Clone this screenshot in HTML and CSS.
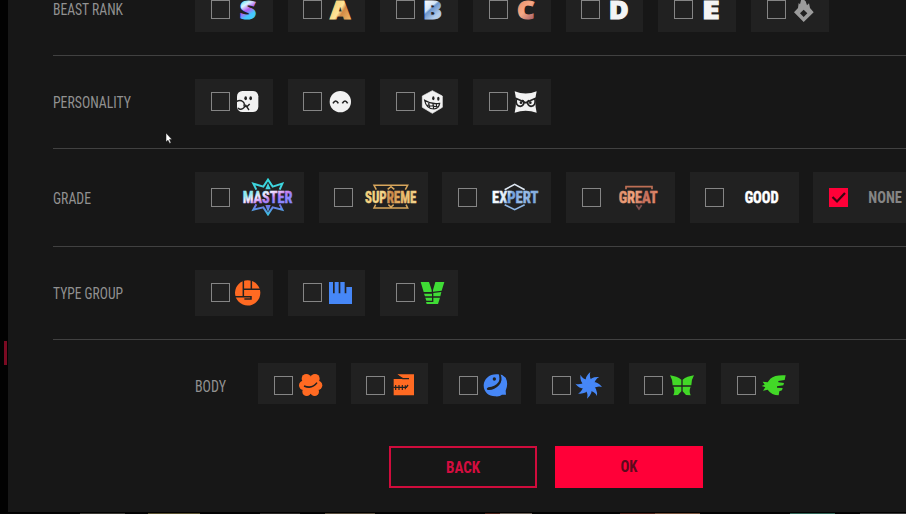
FILE: index.html
```html
<!DOCTYPE html>
<html lang="en">
<head>
  <meta charset="UTF-8">
  <title>Filter</title>
  <link rel="stylesheet" href="styles.css">
</head>
<body>
  <div class="side-mark"></div>
  <div class="modal">
    <div class="filters">

      <div class="filter-row rank-row">
        <svg class="label" viewBox="0 0 142 20"><text x="0" y="16" textLength="70" lengthAdjust="spacingAndGlyphs">BEAST RANK</text></svg>
        <div class="options">
          <div class="tile"><span class="check"></span><svg class="icon rank" viewBox="0 0 78 78">
            <defs><linearGradient id="gS" x1="0" y1="0" x2="0.3" y2="1"><stop offset="0.2" stop-color="#20d5e8"/><stop offset="0.45" stop-color="#d9f4ff"/><stop offset="0.62" stop-color="#b45bf0"/><stop offset="0.8" stop-color="#45c8ff"/></linearGradient></defs>
            <text x="14" y="65" textLength="49" lengthAdjust="spacingAndGlyphs" fill="url(#gS)" stroke="url(#gS)">S</text></svg></div>
          <div class="tile"><span class="check"></span><svg class="icon rank" viewBox="0 0 78 78">
            <defs><linearGradient id="gA" x1="0" y1="0" x2="1" y2="1"><stop offset="0.2" stop-color="#f5cf70"/><stop offset="0.5" stop-color="#ffe49a"/><stop offset="0.6" stop-color="#d28a45"/><stop offset="1" stop-color="#f9cb78"/></linearGradient></defs>
            <text x="6" y="65" textLength="61" lengthAdjust="spacingAndGlyphs" fill="url(#gA)" stroke="url(#gA)">A</text></svg></div>
          <div class="tile"><span class="check"></span><svg class="icon rank" viewBox="0 0 78 78">
            <defs><linearGradient id="gB" x1="0" y1="0" x2="0.5" y2="1"><stop offset="0.3" stop-color="#f4f8fc"/><stop offset="0.52" stop-color="#d4e5f5"/><stop offset="0.58" stop-color="#6d96cc"/><stop offset="0.85" stop-color="#b3cdec"/></linearGradient></defs>
            <text x="9" y="65" textLength="57" lengthAdjust="spacingAndGlyphs" fill="url(#gB)" stroke="url(#gB)">B</text></svg></div>
          <div class="tile"><span class="check"></span><svg class="icon rank" viewBox="0 0 78 78">
            <defs><linearGradient id="gC" x1="0" y1="0" x2="0.6" y2="1"><stop offset="0.2" stop-color="#e88d68"/><stop offset="0.6" stop-color="#f8a985"/><stop offset="1" stop-color="#a9646a"/></linearGradient></defs>
            <text x="12" y="65" textLength="53" lengthAdjust="spacingAndGlyphs" fill="url(#gC)" stroke="url(#gC)">C</text></svg></div>
          <div class="tile"><span class="check"></span><svg class="icon rank" viewBox="0 0 78 78"><text x="8" y="65" textLength="60" lengthAdjust="spacingAndGlyphs" fill="#f4f4f4" stroke="#f4f4f4">D</text></svg></div>
          <div class="tile"><span class="check"></span><svg class="icon rank" viewBox="0 0 78 78"><text x="12" y="65" textLength="53" lengthAdjust="spacingAndGlyphs" fill="#f4f4f4" stroke="#f4f4f4">E</text></svg></div>
          <div class="tile"><span class="check"></span><svg class="icon" viewBox="0 0 78 78">
            <path fill="#9c9c9c" fill-rule="evenodd" d="M32 2L44 13L48 25L54 19L57 33L68 46L38 75L9 46L21 33L23 18L27 22ZM38 38L27 49L38 60L49 49Z"/></svg></div>
        </div>
      </div>

      <div class="filter-row">
        <svg class="label" viewBox="0 0 142 20"><text x="0" y="16" textLength="78" lengthAdjust="spacingAndGlyphs">PERSONALITY</text></svg>
        <div class="options">
          <div class="tile"><span class="check"></span><svg class="icon" viewBox="0 0 78 78">
            <rect x="6" y="6" width="64" height="63" rx="16" fill="#f2f2f2"/>
            <g fill="none" stroke="#222" stroke-width="4"><path d="M4 38Q15 31 24 38Q30 43 27 51Q36 56 44 45M31 47L42 63M9 57Q17 66 29 54"/></g>
            <ellipse cx="32" cy="28" rx="4" ry="6" fill="#222"/><ellipse cx="47" cy="28" rx="4" ry="6" fill="#222"/></svg></div>
          <div class="tile"><span class="check"></span><svg class="icon" viewBox="0 0 78 78">
            <circle cx="37" cy="38" r="32" fill="#f2f2f2"/>
            <path d="M15 43Q23 29 31 43M43 43Q51 29 59 43" fill="none" stroke="#222" stroke-width="5"/></svg></div>
          <div class="tile"><span class="check"></span><svg class="icon" viewBox="0 0 78 78">
            <path d="M37 5L67 21V55L37 73L7 55V21Z" fill="#f2f2f2" stroke="#f2f2f2" stroke-width="2" stroke-linejoin="round"/>
            <ellipse cx="40" cy="28" rx="3.5" ry="6" fill="#222"/><ellipse cx="55" cy="29" rx="3.5" ry="6" fill="#222"/>
            <path d="M14 34Q34 47 59 43Q57 58 42 60Q19 60 14 34ZM20 48L55 54M26 42L29 56M39 44L41 60M49 45L50 57" fill="none" stroke="#222" stroke-width="3.5"/></svg></div>
          <div class="tile"><span class="check"></span><svg class="icon" viewBox="0 0 78 78">
            <path d="M5 7Q38 20 71 7Q63 38 71 71Q38 60 5 71Q13 38 5 7Z" fill="#f2f2f2"/>
            <path d="M6 27L32 38M70 27L44 38M10 31Q7 51 22 52Q34 50 32 38Q38 44 44 38Q43 50 54 52Q69 51 66 31" fill="none" stroke="#222" stroke-width="5"/>
            <circle cx="24" cy="41" r="4" fill="#222"/><circle cx="52" cy="41" r="4" fill="#222"/></svg></div>
        </div>
      </div>

      <div class="filter-row grade">
        <svg class="label" viewBox="0 0 142 20"><text x="0" y="15.5" textLength="38" lengthAdjust="spacingAndGlyphs">GRADE</text></svg>
        <div class="options">
          <div class="tile"><span class="check"></span><svg class="emblem" viewBox="0 0 162 120">
            <defs><linearGradient id="gMaster" gradientUnits="userSpaceOnUse" x1="60" y1="38" x2="75" y2="80"><stop offset="0" stop-color="#8fe9f0"/><stop offset="0.35" stop-color="#f6eaff"/><stop offset="0.75" stop-color="#c07af0"/><stop offset="1" stop-color="#8b86ff"/></linearGradient>
            <linearGradient id="gStar" gradientUnits="userSpaceOnUse" x1="0" y1="4" x2="0" y2="116"><stop offset="0" stop-color="#2fd9dc"/><stop offset="0.4" stop-color="#4fd0e0"/><stop offset="0.7" stop-color="#7a6be8"/><stop offset="1" stop-color="#35c7e0"/></linearGradient></defs>
            <path d="M43 38L34 20L64 29L78 8L92 29L121 20L113 38M43 82L34 98L64 91L78 112L92 91L121 98L113 82" fill="none" stroke="url(#gStar)" stroke-width="6"/>
            <path d="M70 37L78 18L86 37ZM70 84H86L78 106Z" fill="url(#gStar)"/>
            <text x="2" y="78" textLength="149" lengthAdjust="spacingAndGlyphs" fill="url(#gMaster)" stroke="url(#gMaster)">MASTER</text></svg></div>
          <div class="tile"><span class="check"></span><svg class="emblem" viewBox="0 0 162 120">
            <defs><linearGradient id="gSup" gradientUnits="userSpaceOnUse" x1="0" y1="40" x2="153" y2="80"><stop offset="0" stop-color="#f3d17a"/><stop offset="0.35" stop-color="#f7d98c"/><stop offset="0.5" stop-color="#c98547"/><stop offset="0.7" stop-color="#eab869"/><stop offset="1" stop-color="#f1d58f"/></linearGradient></defs>
            <path d="M34 38L27 25H128L121 38M32 83L27 93H128L123 83M68 37L78 29L88 37M70 83L78 90L86 83" fill="none" stroke="#d8a65c" stroke-width="4.5"/>
            <text x="0" y="78" textLength="154" lengthAdjust="spacingAndGlyphs" fill="url(#gSup)" stroke="url(#gSup)">SUPREME</text></svg></div>
          <div class="tile"><span class="check"></span><svg class="emblem" viewBox="0 0 162 120">
            <defs><linearGradient id="gExp" gradientUnits="userSpaceOnUse" x1="20" y1="35" x2="130" y2="85"><stop offset="0" stop-color="#ffffff"/><stop offset="0.32" stop-color="#dcebf8"/><stop offset="0.42" stop-color="#6f9fdd"/><stop offset="0.7" stop-color="#9abde8"/><stop offset="1" stop-color="#7ea9dc"/></linearGradient></defs>
            <path d="M47 38L77 22L107 38" fill="none" stroke="#dfe9f4" stroke-width="5"/>
            <path d="M47 83L77 98L107 83" fill="none" stroke="#8fb6e4" stroke-width="5"/>
            <text x="9" y="78" textLength="139" lengthAdjust="spacingAndGlyphs" fill="url(#gExp)" stroke="url(#gExp)">EXPERT</text></svg></div>
          <div class="tile"><span class="check"></span><svg class="emblem" viewBox="0 0 162 120">
            <defs><linearGradient id="gGreat" gradientUnits="userSpaceOnUse" x1="18" y1="40" x2="133" y2="80"><stop offset="0" stop-color="#e08d68"/><stop offset="0.4" stop-color="#f2a681"/><stop offset="0.65" stop-color="#c56f5c"/><stop offset="1" stop-color="#e99270"/></linearGradient></defs>
            <path d="M39 37V29H117V37" fill="none" stroke="#bd6f55" stroke-width="5"/>
            <path d="M70 84L78 96L86 84" fill="none" stroke="#80504f" stroke-width="5"/>
            <text x="17" y="78" textLength="117" lengthAdjust="spacingAndGlyphs" fill="url(#gGreat)" stroke="url(#gGreat)">GREAT</text></svg></div>
          <div class="tile"><span class="check"></span><svg class="emblem" viewBox="0 0 162 120"><text x="26" y="78" textLength="102" lengthAdjust="spacingAndGlyphs" fill="#fff" stroke="#fff">GOOD</text></svg></div>
          <div class="tile"><span class="check checked"><svg viewBox="0 0 19 19"><path d="M3.5 9L8 13.5L16 5" fill="none" stroke="#3a0612" stroke-width="2.2"/></svg></span><svg class="emblem" viewBox="0 0 162 120"><text x="25" y="78" textLength="101" lengthAdjust="spacingAndGlyphs" fill="#858585">NONE</text></svg></div>
        </div>
      </div>

      <div class="filter-row">
        <svg class="label" viewBox="0 0 142 20"><text x="0" y="16" textLength="70" lengthAdjust="spacingAndGlyphs">TYPE GROUP</text></svg>
        <div class="options">
          <div class="tile"><span class="check"></span><svg class="icon" viewBox="0 0 78 78">
            <circle cx="38" cy="38.5" r="38" fill="#ff6a22"/>
            <path d="M25 0V48M49 0V30M25 28H78M0 50H48V57H28" fill="none" stroke="#222" stroke-width="4.5"/></svg></div>
          <div class="tile"><span class="check"></span><svg class="icon" viewBox="0 0 78 78">
            <path fill="#4687f7" d="M3 6H15V40H20V6H32V40H37V6H50V40H55V21H72V72H3Z"/></svg></div>
          <div class="tile"><span class="check"></span><svg class="icon" viewBox="0 0 78 78">
            <path fill="#3fdc35" d="M2 6H27L35 30V36H11ZM46 6H73L65 32L39 35V30ZM12 41H36V49H15ZM40 39L64 36L61 49H40ZM16 53H36V62H19ZM40 53H60L54 72H20L18 66H40Z"/></svg></div>
        </div>
      </div>

      <div class="filter-row body-row">
        <svg class="label sub" viewBox="0 0 63 20"><text x="0" y="16" textLength="31" lengthAdjust="spacingAndGlyphs">BODY</text></svg>
        <div class="options">
          <div class="tile"><span class="check"></span><svg class="icon" viewBox="0 0 78 78">
            <g fill="#ff6a22"><circle cx="25" cy="20" r="14"/><circle cx="51" cy="20" r="14"/><circle cx="17" cy="40" r="14"/><circle cx="59" cy="40" r="14"/><circle cx="26" cy="59" r="13"/><circle cx="50" cy="59" r="13"/><circle cx="38" cy="39" r="26"/></g>
            <path d="M18 42Q43 52 57 32" fill="none" stroke="#222" stroke-width="4.5"/></svg></div>
          <div class="tile"><span class="check"></span><svg class="icon" viewBox="0 0 78 78">
            <path fill="#ff6a22" d="M19 7H69V70H8V21H36Z"/>
            <path d="M7 46H46L51 39" fill="none" stroke="#222" stroke-width="4"/>
            <path d="M14 39V54M24 39V54M34 39V54M43 40V52" fill="none" stroke="#222" stroke-width="3.5"/>
            <path d="M14 7L35 20H54" fill="none" stroke="#222" stroke-width="4"/></svg></div>
          <div class="tile"><span class="check"></span><svg class="icon" viewBox="0 0 78 78">
            <path fill="#4687f7" d="M44 7C20 5 3 20 2 40C2 62 19 74 38 73Q51 74 57 68H69L68 56Q77 35 68 17Q57 6 44 7Z"/>
            <path fill="#222" d="M52 5Q61 24 48 40Q33 56 14 54Q8 50 16 46Q36 44 46 31Q52 21 47 5Z"/>
            <circle cx="34" cy="21" r="5" fill="#222"/></svg></div>
          <div class="tile"><span class="check"></span><svg class="icon" viewBox="0 0 78 78">
            <defs><path id="ray" d="M29 34Q25 14 43 0Q38 14 49 30Z"/></defs>
            <g fill="#4687f7"><circle cx="38" cy="40" r="16"/>
              <use href="#ray"/><use href="#ray" transform="rotate(45 38 40)"/><use href="#ray" transform="rotate(90 38 40)"/><use href="#ray" transform="rotate(135 38 40)"/><use href="#ray" transform="rotate(180 38 40)"/><use href="#ray" transform="rotate(225 38 40)"/><use href="#ray" transform="rotate(270 38 40)"/><use href="#ray" transform="rotate(315 38 40)"/></g></svg></div>
          <div class="tile"><span class="check"></span><svg class="icon" viewBox="0 0 78 78">
            <path fill="#42d827" d="M3 10Q24 13 37 23V40H11Q11 23 3 10ZM75 10Q54 13 41 23V40H67Q67 23 75 10ZM13 44H37V58L27 69L13 70Q19 57 13 44ZM65 44H41V58L51 69L65 70Q59 57 65 44Z"/></svg></div>
          <div class="tile"><span class="check"></span><svg class="icon" viewBox="0 0 78 78">
            <path fill="#42d827" d="M74 10Q42 8 28 20L20 31L5 29L11 38L2 42L13 46L6 56L20 53Q32 70 53 70L55 58L63 55L65 48L48 47V43L67 40L69 33L52 31V27L71 24Z"/></svg></div>
        </div>
      </div>
    </div>

    <div class="buttons">
      <button class="btn back"><svg viewBox="0 0 60 20"><text x="13" y="15.5" textLength="34" lengthAdjust="spacingAndGlyphs">BACK</text></svg></button>
      <button class="btn ok"><svg viewBox="0 0 60 20"><text x="21.5" y="15" textLength="17" lengthAdjust="spacingAndGlyphs">OK</text></svg></button>
    </div>
  </div>
  <div class="page-edge"></div>

  <svg class="cursor" viewBox="0 0 8 13"><path d="M1 1V10L3 8.2L4.7 11.5L6 10.8L4.5 7.5H7Z" fill="#fff" stroke="#111" stroke-width="0.5"/></svg>
</body>
</html>
```

FILE: styles.css
```css
* {
  box-sizing: border-box;
}

body {
  margin: 0;
  height: 514px;
  overflow: hidden;
  background-color: #020202;
  font-family: "Roboto Condensed", Roboto, "Liberation Sans", sans-serif;
}

svg {
  display: block;
  overflow: visible;
}

.modal {
  margin-left: 8px;
  height: 512px;
  padding-left: 45px;
  overflow: hidden;
  background-color: #171717;
}

/* the list is scrolled down a little */
.filters {
  margin-top: -37px;
}

.filter-row {
  display: flex;
  align-items: center;
  padding: 23px 0;
  border-bottom: 1px solid #414141;
}

.label {
  flex: none;
  width: 142px;
  height: 20px;
  font-size: 16.5px;
  fill: #919191;
}

.label.sub {
  width: 63px;
  margin-top: 4px;
}

.options {
  display: flex;
  gap: 15px;
}

.tile {
  flex: none;
  display: flex;
  align-items: center;
  width: 77.7px;
  height: 46px;
  padding-left: 15.6px;
  padding-bottom: 1px;
  background-color: #212121;
}

.rank-row .tile {
  padding-top: 1px;
  padding-bottom: 0;
}

.grade .options {
  gap: 14.7px;
}

.grade .tile {
  width: 109px;
  height: 51px;
}

.body-row {
  padding-left: 142px;
  border-bottom: none;
}

.body-row .tile {
  height: 41px;
  padding-top: 4px;
}

.check {
  flex: none;
  width: 19px;
  height: 19px;
  border: 1px solid #858585;
}

.check.checked {
  border: none;
  background-color: #ff0038;
}

.icon {
  flex: none;
  width: 26px;
  height: 26px;
  margin-left: 5.4px;
}

.rank {
  font-family: "Open Sans", sans-serif;
  font-weight: 800;
  font-size: 76px;
  stroke-width: 3px;
}

.emblem {
  flex: none;
  width: 54px;
  height: 40px;
  margin-left: 12px;
  font-weight: 700;
  font-size: 49px;
}

.emblem text {
  stroke-width: 1.5px;
}

.buttons {
  display: flex;
  gap: 18px;
  margin: 19px 0 0 336px;
}

.btn {
  display: flex;
  align-items: center;
  justify-content: center;
  width: 148px;
  height: 42px;
  padding: 0 0 1px;
  border: 2px solid #cf0c3c;
  background-color: transparent;
  font-family: inherit;
  font-weight: 700;
  font-size: 16.5px;
}

.btn svg {
  width: 60px;
  height: 20px;
}

.btn.back {
  fill: #d40d3f;
}

.btn.ok {
  border-color: #ff0038;
  background-color: #ff0038;
  fill: #5c0a1c;
}

.side-mark {
  position: absolute;
  left: 4px;
  top: 341px;
  width: 3px;
  height: 24px;
  background-color: #7a0a22;
}

/* sliver of the page under the dialog */
.page-edge {
  height: 1px;
  margin-top: 1px;
  background: linear-gradient(90deg, #050505 80px, #3a3833 80px 125px, #050505 125px 148px, #57502f 148px 200px, #050505 200px 260px, #2c2a28 260px 300px, #050505 300px 325px, #554a3a 325px 375px, #050505 375px 485px, #4a2219 485px 500px, #6a5f56 500px 532px, #050505 532px 620px, #4c2219 620px 655px, #75503a 655px 700px, #050505 700px 790px, #2f6254 790px 835px, #050505 835px 860px, #3a3a3a 860px);
}

.cursor {
  position: absolute;
  left: 165px;
  top: 132px;
  width: 8px;
  height: 13px;
}
```
